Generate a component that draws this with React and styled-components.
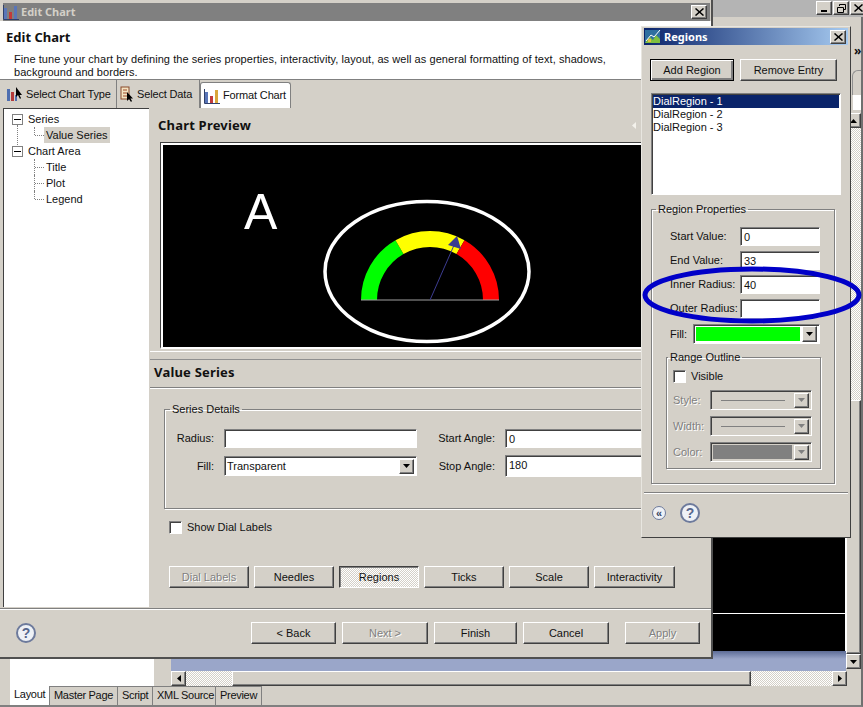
import React from "react";
import styled, { createGlobalStyle, css } from "styled-components";

const FONT = `"Liberation Sans", "Noto Sans", sans-serif`;
const HEAD_FONT = `"Noto Sans", "Liberation Sans", sans-serif`;
const FACE = "#d4d0c8";

const GlobalStyle = createGlobalStyle`
  html, body {
    margin: 0;
    padding: 0;
    background: ${FACE};
    overflow: hidden;
  }
  * {
    box-sizing: border-box;
  }
`;

const raised = css`
  border: 1px solid;
  border-color: #fff #404040 #404040 #fff;
  box-shadow: inset -1px -1px 0 #808080;
`;

const sunken = css`
  border: 1px solid;
  border-color: #808080 #fff #fff #808080;
  box-shadow: inset 1px 1px 0 #404040;
`;

const dither = css`
  background: repeating-conic-gradient(#fff 0 25%, ${FACE} 0 50%) 0 0 / 2px 2px;
`;

const Page = styled.div`
  position: relative;
  width: 863px;
  height: 707px;
  overflow: hidden;
  font: 11px/13px ${FONT};
  color: #111;
  background: ${FACE};
  white-space: nowrap;
`;

/* workbench behind the dialogs */

const Workbench = styled.div`
  display: flex;
  flex-direction: column;
  height: 707px;
  border-right: 2px solid #707070;
  border-bottom: 2px solid #808080;
`;

const WorkbenchTitle = styled.div`
  display: flex;
  justify-content: flex-end;
  gap: 1px;
  height: 17px;
  margin-right: -5px;
  padding: 1px 0 0;
  background: #b4b4b4;
`;

const WorkbenchBody = styled.div`
  flex: 1;
  display: grid;
  grid-template-columns: 10px 144px 17px 1fr 15px;
  min-height: 0;
`;

const WhitePanel = styled.div`
  grid-column: 2;
  margin-top: 500px;
  background: #fff;
`;

const EditorColumn = styled.div`
  grid-column: 4;
  display: flex;
  flex-direction: column;
`;

const BlackCanvas = styled.div`
  flex: 1;
  display: flex;
  flex-direction: column;
  justify-content: flex-end;
  margin-top: 100px;
  padding-bottom: 37px;
  background: #000;
  border-right: 1px solid #fff;
`;

const CanvasLine = styled.div`
  height: 1px;
  background: #fff;
`;

const BlueBand = styled.div`
  height: 20px;
  background: linear-gradient(#5d6c96, #9aa6c9 40%);
`;

const HScroll = styled.div`
  display: flex;
  height: 15px;
  margin-right: -1px;
  background: ${FACE};
`;

const HTrack = styled.div`
  flex: ${(p) => p.$grow};
  ${dither}
`;

const HThumb = styled.div`
  flex: 1;
  ${raised}
`;

const VScroll = styled.div`
  display: flex;
  flex-direction: column;
  padding: 24px 0 17px;
`;

const Overflow = styled.div`
  height: 19px;
  padding-left: 8px;
  font: bold 12px/19px ${HEAD_FONT};
`;

const StripTab = styled.div`
  height: 25px;
  margin: 10px 0 0 6px;
  border-top: 1px solid #909090;
  border-left: 1px solid #909090;
  border-radius: 6px 0 0 0;
`;

const VTrack = styled.div`
  height: 272px;
  ${dither}
`;

const VThumb = styled.div`
  flex: 1;
  ${raised}
`;

const StripBox = styled.div`
  height: 15px;
  margin: 0 0 3px 7px;
  background: #fff;
`;

const ArrowButton = styled.div`
  display: flex;
  align-items: center;
  justify-content: center;
  flex: none;
  width: ${(p) => p.$w || 15}px;
  height: ${(p) => p.$h || 15}px;
  background: ${FACE};
  ${raised}
`;

const SheetTabs = styled.div`
  display: flex;
  height: 19px;
  padding-left: 10px;
`;

const SheetTab = styled.div`
  width: ${(p) => p.$w}px;
  padding: 2px 0 0 4px;
  background: ${(p) => (p.$on ? "#fff" : FACE)};
  border-right: 1px solid #808080;
  border-top: ${(p) => (p.$on ? "none" : "1px solid #808080")};
  line-height: 13px;
  letter-spacing: -0.3px;
`;

/* shared widgets */

const Button = styled.div`
  display: flex;
  align-items: center;
  justify-content: center;
  flex: none;
  width: ${(p) => p.$w}px;
  height: ${(p) => p.$h || 22}px;
  ${raised}
  ${(p) =>
    p.$off &&
    css`
      color: #808080;
      text-shadow: 1px 1px 0 #fff;
    `}
  ${(p) =>
    p.$down &&
    css`
      ${dither}
      border-color: #404040 #fff #fff #404040;
      box-shadow: inset 1px 1px 0 #808080;
    `}
  ${(p) =>
    p.$default &&
    css`
      border-color: #000;
      box-shadow: inset 1px 1px 0 #fff, inset -2px -2px 0 #808080;
    `}
`;

const Input = styled.div`
  width: ${(p) => p.$w}px;
  height: ${(p) => p.$h || 19}px;
  padding: 3px 0 0 3px;
  background: #fff;
  ${sunken}
`;

const Combo = styled.div`
  display: flex;
  align-items: center;
  justify-content: space-between;
  width: ${(p) => p.$w}px;
  height: 20px;
  padding: 2px 2px 2px 2px;
  background: ${(p) => (p.$off ? FACE : "#fff")};
  ${sunken}
`;

const Swatch = styled.div`
  flex: 1;
  height: 14px;
  margin-right: 2px;
  background: ${(p) => p.$color};
`;

const ComboLine = styled.div`
  flex: 1;
  height: 1px;
  margin: 0 9px 0 8px;
  background: #808080;
`;

const Check = styled.div`
  flex: none;
  width: 13px;
  height: 13px;
  background: #fff;
  ${sunken}
`;

const CheckRow = styled.div`
  display: flex;
  align-items: center;
  gap: 5px;
`;

const Group = styled.fieldset`
  margin: ${(p) => p.$margin || 0};
  min-width: 0;
  width: ${(p) => p.$w}px;
  padding: ${(p) => p.$pad};
  border: 1px solid #808080;
  box-shadow: 1px 1px 0 #fff, inset 1px 1px 0 #fff;
`;

const Legend = styled.legend`
  margin-left: ${(p) => p.$indent}px;
  padding: 0 2px;
  line-height: 13px;
`;

const Label = styled.div`
  color: ${(p) => (p.$off ? "#808080" : "inherit")};
  text-shadow: ${(p) => (p.$off ? "1px 1px 0 #fff" : "none")};
  text-align: ${(p) => p.$align || "left"};
`;

const HelpCircle = styled.div`
  display: flex;
  align-items: center;
  justify-content: center;
  width: 20px;
  height: 20px;
  border: 2px solid #6d7a9c;
  border-radius: 50%;
  background: #eef1f6;
  color: #56658c;
  font: bold 14px/16px "Liberation Sans", sans-serif;
`;

const BackCircle = styled(HelpCircle)`
  width: 14px;
  height: 14px;
  border-width: 1px;
  font-size: 11px;
  line-height: 11px;
  color: #33415f;
`;

const Triangle = ({ dir = "down", color = "#000" }) => {
  const points = {
    down: "0,0 7,0 3.5,4",
    up: "0,4 7,4 3.5,0",
    left: "4,0 4,7 0,3.5",
    right: "0,0 0,7 4,3.5",
  };
  const vertical = dir === "down" || dir === "up";
  return (
    <svg width={vertical ? 7 : 4} height={vertical ? 4 : 7}>
      <polygon points={points[dir]} fill={color} />
    </svg>
  );
};

const CloseIcon = () => (
  <svg width="9" height="8" viewBox="0 0 9 8">
    <path d="M0.5 0.5 L8.5 7.5 M8.5 0.5 L0.5 7.5" stroke="#000" strokeWidth="1.5" />
  </svg>
);

const MinIcon = () => (
  <svg width="9" height="8" viewBox="0 0 9 8">
    <path d="M1 7 H7" stroke="#000" strokeWidth="2" />
  </svg>
);

const RestoreIcon = () => (
  <svg width="9" height="9" viewBox="0 0 9 9">
    <path d="M2.5 2 V0.5 H8.5 V5.5 H6.5 M0.5 3.5 H6.5 V8.5 H0.5 Z" stroke="#000" fill="none" />
  </svg>
);

const BarsIcon = ({ alert }) => (
  <svg width="16" height="16" viewBox="0 0 16 16">
    <rect x="1" y="4" width="3" height="11" fill="#5a76b8" />
    <rect x="6" y="8" width="3" height="7" fill="#c23a3a" />
    <rect x="11" y="2" width="3" height="13" fill={alert ? "#d9a63a" : "#5a76b8"} />
    <path d="M0.5 1 V15.5 H16" stroke="#30406a" fill="none" />
  </svg>
);

const DataIcon = () => (
  <svg width="14" height="16" viewBox="0 0 14 16">
    <rect x="1" y="1" width="8" height="12" fill="#f3e3c2" stroke="#8a4a2a" />
    <path d="M3 4 H7 M3 7 H7 M3 10 H7" stroke="#a04a2a" />
    <path d="M7 6 V15 L9 13 L11 16 L12 15 L10.5 12.5 H13 Z" fill="#000" />
  </svg>
);

const TypeIcon = () => (
  <svg width="17" height="16" viewBox="0 0 17 16">
    <rect x="1" y="3" width="3" height="12" fill="#4f6fb0" />
    <rect x="5" y="6" width="3" height="9" fill="#b33a3a" />
    <rect x="9" y="9" width="2" height="6" fill="#4f6fb0" />
    <path d="M10 1 V11 L12 9 L14 13 L15 12 L13.5 9 H16 Z" fill="#000" />
  </svg>
);

const RegionIcon = () => (
  <svg width="16" height="15" viewBox="0 0 16 15">
    <rect x="0" y="1" width="15" height="13" fill="#2f6f9f" />
    <path d="M0 14 L5 8 L8 11 L11 6 L15 10 V14 Z" fill="#7fbf3f" />
    <path d="M1 12 L6 6 L9 8 L15 1" stroke="#fff" fill="none" />
    <rect x="3" y="10" width="3" height="3" fill="#e0c040" />
  </svg>
);

/* main dialog */

const MainWindow = styled.div`
  position: absolute;
  left: 0;
  top: 0;
  display: flex;
  flex-direction: column;
  width: 713px;
  height: 659px;
  padding-top: 3px;
  background: ${FACE};
  border-right: 2px solid #505050;
  border-bottom: 2px solid #505050;
`;

const MainTitle = styled.div`
  display: flex;
  align-items: center;
  gap: 2px;
  height: 18px;
  margin: 0 1px 0 3px;
  padding: 0 3px 0 0;
  background: #808080;
  color: ${FACE};
  font: 700 11px/18px ${HEAD_FONT};
`;

const TitleText = styled.div`
  flex: 1;
`;

const SmallButton = styled.div`
  display: flex;
  align-items: center;
  justify-content: center;
  width: 16px;
  height: 14px;
  background: ${FACE};
  ${raised}
`;

const Header = styled.div`
  height: 59px;
  padding: 9px 6px 0;
  background: #fff;
  border-bottom: 1px solid #808080;
`;

const HeaderTitle = styled.div`
  font: 700 13px/15px ${HEAD_FONT};
`;

const HeaderText = styled.div`
  margin: 8px 0 0 8px;
  white-space: normal;
  width: 610px;
  line-height: 13px;
  letter-spacing: 0.06px;
`;

const Tabs = styled.div`
  display: flex;
  height: 28px;
  padding: 0 0 0 3px;
`;

const Tab = styled.div`
  display: flex;
  align-items: center;
  gap: 3px;
  width: ${(p) => p.$w}px;
  padding-left: 3px;
  margin-top: ${(p) => (p.$on ? 2 : 0)}px;
  background: ${(p) => (p.$on ? "#fff" : "transparent")};
  border-right: 1px solid #808080;
  border-top: ${(p) => (p.$on ? "1px solid #808080" : "none")};
  border-left: ${(p) => (p.$on ? "1px solid #808080" : "none")};
  border-radius: ${(p) => (p.$on ? "3px 3px 0 0" : 0)};
  letter-spacing: -0.15px;

  svg {
    flex: none;
  }
`;

const MainBody = styled.div`
  flex: 1;
  display: flex;
  min-height: 0;
`;

const TreePanel = styled.div`
  flex: none;
  width: 146px;
  margin-left: 3px;
  padding-top: 2px;
  background: #fff;
  border-top: 1px solid #404040;
  border-left: 1px solid #404040;
`;

const TreeRow = styled.div`
  position: relative;
  display: flex;
  align-items: center;
  gap: 3px;
  height: 16px;
  padding-left: ${(p) => (p.$child ? 38 : 7)}px;

  ${(p) =>
    p.$child &&
    css`
      &::before {
        content: "";
        position: absolute;
        left: 30px;
        top: 0;
        height: ${p.$last ? 8 : 16}px;
        border-left: 1px dotted #808080;
      }
      &::after {
        content: "";
        position: absolute;
        left: 31px;
        top: 8px;
        width: 9px;
        border-top: 1px dotted #808080;
      }
    `}
`;

const Toggle = styled.div`
  position: relative;
  flex: none;
  width: 11px;
  height: 11px;
  margin-left: 1px;
  background: #fff;
  border: 1px solid #808080;

  &::after {
    content: "";
    position: absolute;
    left: 1px;
    top: 4px;
    width: 7px;
    height: 1px;
    background: #000;
  }

  ${(p) =>
    p.$trunk &&
    css`
      &::before {
        content: "";
        position: absolute;
        left: 4px;
        top: 10px;
        height: 22px;
        border-left: 1px dotted #808080;
      }
    `}
`;

const TreeText = styled.div`
  padding: 0 2px;
  margin-left: ${(p) => (p.$child ? 2 : 0)}px;
  line-height: 16px;
  background: ${(p) => (p.$on ? FACE : "transparent")};
`;

const Content = styled.div`
  flex: 1;
  display: flex;
  flex-direction: column;
  min-width: 0;
  margin-left: 1px;
  overflow: hidden;
`;

const SectionTitle = styled.div`
  height: ${(p) => p.$h}px;
  padding: ${(p) => p.$pad};
  font: 700 13px/15px ${HEAD_FONT};
  letter-spacing: 0.2px;
`;

const PreviewHead = styled(SectionTitle)`
  display: flex;
  align-items: flex-start;
  justify-content: space-between;

  svg {
    margin-top: 4px;
  }
`;

const Preview = styled.div`
  width: 500px;
  height: 207px;
  margin-left: 10px;
  padding: 3px 0 0 3px;
  border-top: 1px solid #404040;
  border-left: 1px solid #404040;
  border-bottom: 2px solid #fff;
  background: #000;
  box-shadow: inset 2px 2px 0 #fff;
`;

const Sash = styled.div`
  height: 9px;
  margin-top: 2px;
  border-top: 1px solid #fff;
  border-bottom: 1px solid #909090;
`;

const ValueHead = styled.div`
  height: 28px;
  padding: 5px 0 0 4px;
  border-bottom: 1px solid #808080;
  box-shadow: 0 1px 0 #fff;
`;

const DetailGrid = styled.div`
  display: grid;
  grid-template-columns: 47px 193px 68px 140px;
  column-gap: 10px;
  row-gap: 7px;
  align-items: center;
`;

const GroupRow = styled.div`
  padding: 15px 0 0 14px;
`;

const LabelsRow = styled.div`
  padding: 12px 0 0 19px;
`;

const ActionRow = styled.div`
  display: flex;
  gap: 5px;
  padding: 32px 0 0 19px;
`;

const Footer = styled.div`
  display: flex;
  align-items: center;
  height: 49px;
  margin-top: 1px;
  padding: 0 11px 0 16px;
  border-top: 1px solid #808080;
  box-shadow: inset 0 1px 0 #fff;
`;

const FooterSpacer = styled.div`
  flex: 1;
`;

const FooterButtons = styled.div`
  display: flex;
  gap: 6px;
`;

const ApplyGap = styled.div`
  width: 4px;
`;

/* regions dialog */

const RegionsWindow = styled.div`
  position: absolute;
  left: 641px;
  top: 26px;
  display: flex;
  flex-direction: column;
  width: 210px;
  height: 512px;
  padding: 1px 0 0 2px;
  background: ${FACE};
  border: 1px solid;
  border-color: #e8e6e0 #404040 #404040 #e8e6e0;
`;

const RegionsTitle = styled.div`
  display: flex;
  align-items: center;
  gap: 3px;
  height: 17px;
  margin-right: 2px;
  padding: 0 2px 0 1px;
  background: linear-gradient(90deg, #0a246a, #a6caf0);
  color: #fff;
  font: 700 11px/17px ${HEAD_FONT};
`;

const RegionsButtons = styled.div`
  display: flex;
  gap: 6px;
  margin: 14px 0 0 6px;
`;

const ListBox = styled.div`
  width: 190px;
  height: 102px;
  margin: 12px 0 0 7px;
  padding: 1px 1px 0;
  background: #fff;
  ${sunken}
`;

const ListItem = styled.div`
  height: 13px;
  line-height: 13px;
  background: ${(p) => (p.$on ? "#0a246a" : "transparent")};
  color: ${(p) => (p.$on ? "#fff" : "inherit")};
`;

const FormGrid = styled.div`
  display: grid;
  grid-template-columns: 70px 80px;
  row-gap: 5px;
  align-items: center;
`;

const FillRow = styled.div`
  display: flex;
  align-items: center;
  gap: 6px;
  margin-top: 6px;
`;

const OutlineGrid = styled.div`
  display: grid;
  grid-template-columns: 37px 102px;
  row-gap: 6px;
  align-items: center;
  margin-top: 7px;
`;

const Separator = styled.div`
  height: 2px;
  margin: 8px 2px 0 0;
  border-top: 1px solid #808080;
  border-bottom: 1px solid #fff;
`;

const RegionsFooter = styled.div`
  display: flex;
  align-items: center;
  gap: 14px;
  padding: 9px 0 0 8px;
`;

/* pen circle drawn on the shot */

const Annotation = styled.svg`
  position: absolute;
  left: 640px;
  top: 262px;
`;

const Dial = () => (
  <svg width="476" height="201" viewBox="164 146 476 201">
    <text x="244" y="229" fill="#fff" fontFamily="Liberation Sans" fontSize="50">
      A
    </text>
    <ellipse cx="427" cy="271.5" rx="102" ry="70" fill="none" stroke="#fff" strokeWidth="3.5" />
    <path d="M361 300 A69 69 0 0 1 395.5 240.2 L403.5 254 A53 53 0 0 0 377 300 Z" fill="#00ff00" />
    <path d="M395.5 240.2 A69 69 0 0 1 464.5 240.2 L456.5 254 A53 53 0 0 0 403.5 254 Z" fill="#ffff00" />
    <path d="M464.5 240.2 A69 69 0 0 1 499 300 L483 300 A53 53 0 0 0 456.5 254 Z" fill="#ff0000" />
    <path d="M361 300 H499" stroke="#a0a0a0" />
    <path d="M430 300 L455 243" stroke="#3c3c90" />
    <polygon points="457,236 448,245 461,249" fill="#3c3c90" />
  </svg>
);

const App = () => (
  <>
    <GlobalStyle />
    <Page>
      <Workbench>
        <WorkbenchTitle>
          <SmallButton><MinIcon /></SmallButton>
          <SmallButton><RestoreIcon /></SmallButton>
          <SmallButton><CloseIcon /></SmallButton>
        </WorkbenchTitle>
        <WorkbenchBody>
          <WhitePanel />
          <EditorColumn>
            <BlackCanvas>
              <CanvasLine />
            </BlackCanvas>
            <BlueBand />
            <HScroll>
              <ArrowButton><Triangle dir="left" /></ArrowButton>
              <HTrack $grow="0 0 46px" />
              <HThumb />
              <HTrack $grow="0 0 81px" />
              <ArrowButton><Triangle dir="right" /></ArrowButton>
            </HScroll>
          </EditorColumn>
          <VScroll>
            <Overflow>»</Overflow>
            <StripTab />
            <StripBox />
            <ArrowButton><Triangle dir="up" /></ArrowButton>
            <VTrack />
            <VThumb />
            <ArrowButton><Triangle dir="down" /></ArrowButton>
          </VScroll>
        </WorkbenchBody>
        <SheetTabs>
          <SheetTab $w={40} $on>Layout</SheetTab>
          <SheetTab $w={68}>Master Page</SheetTab>
          <SheetTab $w={35}>Script</SheetTab>
          <SheetTab $w={63}>XML Source</SheetTab>
          <SheetTab $w={46}>Preview</SheetTab>
        </SheetTabs>
      </Workbench>

      <MainWindow>
        <MainTitle>
          <BarsIcon />
          <TitleText>Edit Chart</TitleText>
          <SmallButton><CloseIcon /></SmallButton>
        </MainTitle>
        <Header>
          <HeaderTitle>Edit Chart</HeaderTitle>
          <HeaderText>
            Fine tune your chart by defining the series properties, interactivity, layout, as well as general formatting of text, shadows, background and borders.
          </HeaderText>
        </Header>
        <Tabs>
          <Tab $w={114}><TypeIcon />Select Chart Type</Tab>
          <Tab $w={83}><DataIcon />Select Data</Tab>
          <Tab $w={91} $on><BarsIcon alert />Format Chart</Tab>
        </Tabs>
        <MainBody>
          <TreePanel>
            <TreeRow><Toggle $trunk /><TreeText>Series</TreeText></TreeRow>
            <TreeRow $child $last><TreeText $child $on>Value Series</TreeText></TreeRow>
            <TreeRow><Toggle /><TreeText>Chart Area</TreeText></TreeRow>
            <TreeRow $child><TreeText $child>Title</TreeText></TreeRow>
            <TreeRow $child><TreeText $child>Plot</TreeText></TreeRow>
            <TreeRow $child $last><TreeText $child>Legend</TreeText></TreeRow>
          </TreePanel>
          <Content>
            <PreviewHead $h={34} $pad="10px 75px 0 8px">
              Chart Preview
              <Triangle dir="left" color="#f4f2ec" />
            </PreviewHead>
            <Preview><Dial /></Preview>
            <Sash />
            <ValueHead><SectionTitle $h={20} $pad="0">Value Series</SectionTitle></ValueHead>
            <GroupRow>
              <Group $w={540} $pad="13px 0 31px 2px">
                <Legend $indent={3}>Series Details</Legend>
                <DetailGrid>
                  <Label $align="right">Radius:</Label>
                  <Input $w={193} />
                  <Label $align="right">Start Angle:</Label>
                  <Input $w={140}>0</Input>
                  <Label $align="right">Fill:</Label>
                  <Combo $w={193}>
                    Transparent
                    <ArrowButton><Triangle /></ArrowButton>
                  </Combo>
                  <Label $align="right">Stop Angle:</Label>
                  <Input $w={140} $h={22}>180</Input>
                </DetailGrid>
              </Group>
            </GroupRow>
            <LabelsRow>
              <CheckRow><Check />Show Dial Labels</CheckRow>
            </LabelsRow>
            <ActionRow>
              <Button $w={80} $off>Dial Labels</Button>
              <Button $w={80}>Needles</Button>
              <Button $w={80} $down>Regions</Button>
              <Button $w={80}>Ticks</Button>
              <Button $w={80}>Scale</Button>
              <Button $w={81}>Interactivity</Button>
            </ActionRow>
          </Content>
        </MainBody>
        <Footer>
          <HelpCircle>?</HelpCircle>
          <FooterSpacer />
          <FooterButtons>
            <Button $w={85}>&lt; Back</Button>
            <Button $w={86} $off>Next &gt;</Button>
            <Button $w={83}>Finish</Button>
            <Button $w={86}>Cancel</Button>
            <ApplyGap />
            <Button $w={75} $off>Apply</Button>
          </FooterButtons>
        </Footer>
      </MainWindow>

      <RegionsWindow>
        <RegionsTitle>
          <RegionIcon />
          <TitleText>Regions</TitleText>
          <SmallButton><CloseIcon /></SmallButton>
        </RegionsTitle>
        <RegionsButtons>
          <Button $w={84} $default>Add Region</Button>
          <Button $w={97}>Remove Entry</Button>
        </RegionsButtons>
        <ListBox>
          <ListItem $on>DialRegion - 1</ListItem>
          <ListItem>DialRegion - 2</ListItem>
          <ListItem>DialRegion - 3</ListItem>
        </ListBox>
        <Group $w={184} $margin="8px 0 0 7px" $pad="11px 14px 14px 18px">
          <Legend $indent={-14}>Region Properties</Legend>
          <FormGrid>
            <Label>Start Value:</Label>
            <Input $w={80}>0</Input>
            <Label>End Value:</Label>
            <Input $w={80}>33</Input>
            <Label>Inner Radius:</Label>
            <Input $w={80}>40</Input>
            <Label>Outer Radius:</Label>
            <Input $w={80} />
          </FormGrid>
          <FillRow>
            <Label>Fill:</Label>
            <Combo $w={128}>
              <Swatch $color="#00ff00" />
              <ArrowButton $h={16}><Triangle /></ArrowButton>
            </Combo>
          </FillRow>
          <Group $w={155} $margin="7px 0 0 -4px" $pad="6px 0 6px 6px">
            <Legend $indent={-5}>Range Outline</Legend>
            <CheckRow><Check />Visible</CheckRow>
            <OutlineGrid>
              <Label $off>Style:</Label>
              <Combo $w={102} $off>
                <ComboLine />
                <ArrowButton><Triangle color="#808080" /></ArrowButton>
              </Combo>
              <Label $off>Width:</Label>
              <Combo $w={102} $off>
                <ComboLine />
                <ArrowButton><Triangle color="#808080" /></ArrowButton>
              </Combo>
              <Label $off>Color:</Label>
              <Combo $w={102} $off>
                <Swatch $color="#808080" />
                <ArrowButton><Triangle color="#808080" /></ArrowButton>
              </Combo>
            </OutlineGrid>
          </Group>
        </Group>
        <Separator />
        <RegionsFooter>
          <BackCircle>«</BackCircle>
          <HelpCircle>?</HelpCircle>
        </RegionsFooter>
      </RegionsWindow>

      <Annotation width="223" height="66" viewBox="0 0 223 66">
        <ellipse cx="112" cy="33" rx="107" ry="26" fill="none" stroke="#0000c8" strokeWidth="5" />
      </Annotation>
    </Page>
  </>
);

export default App;
